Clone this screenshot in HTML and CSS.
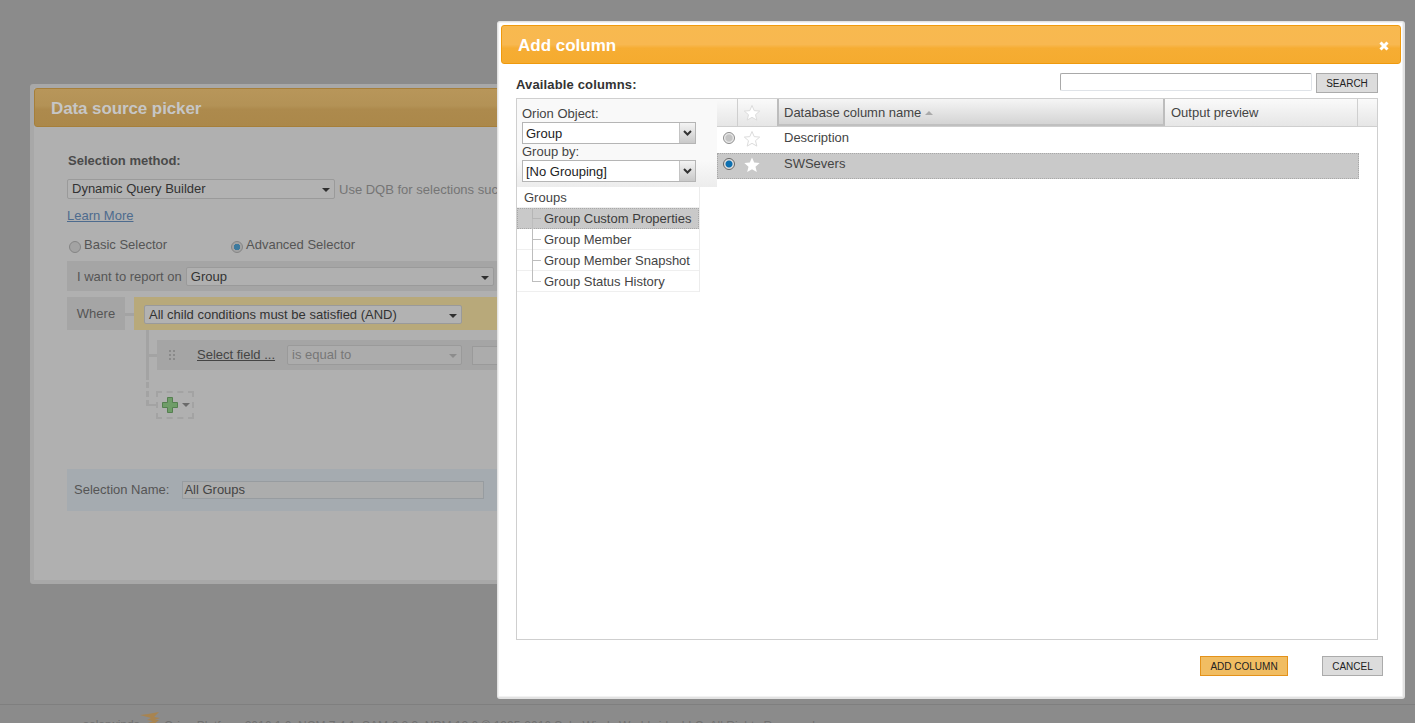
FILE: index.html
```html
<!DOCTYPE html>
<html lang="en">
<head>
<meta charset="utf-8">
<title>Add column</title>
<link rel="stylesheet" href="styles.css">
</head>
<body>
<div class="page-footer">
  <span class="footer-brand">solarwinds</span>
  <svg class="footer-logo" viewBox="0 0 20 12" width="20" height="12"><path d="M0 3 8 2 19 0 14 5 20 6 15 8 19 8 14 12 8 11 13 9 7 8 11 6Z" fill="#a88450"/></svg>
  <span class="footer-text">Orion Platform 2016.1.0, NCM 7.4.1, SAM 6.2.3, NPM 12.0 &copy; 1995-2016 SolarWinds Worldwide, LLC. All Rights Reserved.</span>
</div>

<section class="dlg back">
  <header class="back-head">Data source picker</header>
  <div class="back-body">
    <div class="b-title">Selection method:</div>
    <div class="b-method">
      <div class="b-select b-method-select">Dynamic Query Builder<i class="caret"></i></div>
      <span class="b-hint">Use DQB for selections such as dynamic queries</span>
    </div>
    <a class="b-learn">Learn More</a>
    <div class="b-radios">
      <label class="b-radio-a"><span class="radio dim"></span>Basic Selector</label>
      <label class="b-radio-b"><span class="radio dim on"></span>Advanced Selector</label>
    </div>
    <div class="b-report">
      <span>I want to report on</span>
      <div class="b-select b-report-select">Group<i class="caret"></i></div>
    </div>
    <div class="b-where">
      <div class="b-where-tag">Where</div>
      <div class="b-where-link"></div>
      <div class="b-where-bar"><div class="b-select b-and">All child conditions must be satisfied (AND)<i class="caret"></i></div></div>
    </div>
    <div class="b-tree">
      <div class="b-line"></div>
      <div class="b-cond">
        <svg class="b-grip" width="6" height="10" viewBox="0 0 6 10"><g fill="#8a8a8a"><rect width="2" height="2"/><rect x="4" width="2" height="2"/><rect y="4" width="2" height="2"/><rect x="4" y="4" width="2" height="2"/><rect y="8" width="2" height="2"/><rect x="4" y="8" width="2" height="2"/></g></svg>
        <a class="b-field">Select field ...</a>
        <div class="b-select b-equal">is equal to<i class="caret light"></i></div>
        <div class="b-value"></div>
      </div>
      <div class="b-dash"></div>
      <div class="b-add">
        <svg width="16" height="16" viewBox="0 0 16 16"><path d="M5.500.5h5v5h5v5h-5v5h-5v-5h-5v-5h5z" fill="#6f9d68" stroke="#557f50"/></svg>
        <i class="caret add"></i>
      </div>
    </div>
    <div class="b-name">
      <span class="b-name-label">Selection Name:</span>
      <div class="b-input">All Groups</div>
    </div>
  </div>
</section>

<section class="dlg front">
  <header class="f-head">
    <span>Add column</span>
    <svg class="f-close" width="10" height="10" viewBox="0 0 10 10"><path d="M1.500 1.500 8.500 8.500M8.500 1.500 1.500 8.500" stroke="#fff" stroke-width="3"/></svg>
  </header>
  <div class="f-tools">
    <strong>Available columns:</strong>
    <div class="f-search">
      <div class="f-search-input"></div>
      <div class="btn">SEARCH</div>
    </div>
  </div>
  <div class="f-panel">
    <aside class="f-side">
      <div class="f-filters">
        <div class="f-label">Orion Object:</div>
        <div class="f-select">Group<span class="f-arrow"><svg width="9" height="6" viewBox="0 0 9 6"><path d="M1 1 4.500 4.500 8 1" fill="none" stroke="#333" stroke-width="2"/></svg></span></div>
        <div class="f-label">Group by:</div>
        <div class="f-select">[No Grouping]<span class="f-arrow"><svg width="9" height="6" viewBox="0 0 9 6"><path d="M1 1 4.500 4.500 8 1" fill="none" stroke="#333" stroke-width="2"/></svg></span></div>
      </div>
      <ul class="tree">
        <li class="tree-root">Groups</li>
        <li class="sel"><i class="tee"></i>Group Custom Properties</li>
        <li><i class="tee"></i>Group Member</li>
        <li><i class="tee"></i>Group Member Snapshot</li>
        <li><i class="tee last"></i>Group Status History</li>
      </ul>
    </aside>
    <div class="grid">
      <div class="g-head">
        <div class="c-radio"></div>
        <div class="c-star"><svg width="18" height="18" viewBox="0 0 18 18"><path class="star-o" d="M9 1.500 11.200 6.600 16.700 7.100 12.500 10.700 13.800 16.100 9 13.300 4.200 16.100 5.500 10.700 1.300 7.100 6.800 6.600Z"/></svg></div>
        <div class="c-name">Database column name<i class="sort"></i></div>
        <div class="c-out">Output preview</div>
        <div class="c-end"></div>
      </div>
      <div class="g-row">
        <div class="c-radio"><span class="radio"></span></div>
        <div class="c-star"><svg width="18" height="18" viewBox="0 0 18 18"><path class="star-o" d="M9 1.500 11.200 6.600 16.700 7.100 12.500 10.700 13.800 16.100 9 13.300 4.200 16.100 5.500 10.700 1.300 7.100 6.800 6.600Z"/></svg></div>
        <div class="c-name">Description</div>
      </div>
      <div class="g-row sel">
        <div class="c-radio"><span class="radio on"></span></div>
        <div class="c-star"><svg width="18" height="18" viewBox="0 0 18 18"><path fill="#fff" d="M9 1.500 11.200 6.600 16.700 7.100 12.500 10.700 13.800 16.100 9 13.300 4.200 16.100 5.500 10.700 1.300 7.100 6.800 6.600Z"/></svg></div>
        <div class="c-name">SWSevers</div>
      </div>
    </div>
  </div>
  <footer class="f-foot">
    <div class="btn primary">ADD COLUMN</div>
    <div class="btn cancel">CANCEL</div>
  </footer>
</section>
</body>
</html>
```

FILE: styles.css
```css
* { box-sizing: border-box; }
html, body { margin: 0; height: 723px; overflow: hidden; }
body {
  position: relative;
  background: #8b8b8b;
  font: 13px "Liberation Sans", Arial, sans-serif;
  color: #333;
}
ul { list-style: none; margin: 0; padding: 0; }
i { display: block; }

.page-footer {
  position: absolute;
  left: 0; right: 0; top: 704px; height: 19px;
  border-top: 1px solid #7f7f7f;
  overflow: hidden;
  font-size: 12px;
  color: #707070;
  white-space: nowrap;
}
.footer-brand { position: absolute; left: 83px; top: 13px; }
.footer-logo { position: absolute; left: 140px; top: 7px; }
.footer-text { position: absolute; left: 164px; top: 14px; }

.dlg { position: absolute; }

/* dimmed dialog */
.back {
  left: 30px; top: 84px; width: 500px; height: 500px;
  background: #b0b0b0;
  border: 4px solid #a8a8a8;
  border-radius: 3px;
  overflow: hidden;
  color: #4a4a4a;
}
.back-head {
  height: 39px;
  margin: 0 -4px 0 0;
  padding: 10px 16px 0;
  background: linear-gradient(#b8965a 0, #b39256 45%, #ad8a4d 55%, #ab884a 100%);
  border: 1px solid #a67f3a;
  border-radius: 3px;
  font-size: 17px;
  font-weight: 700;
  letter-spacing: -.1px;
  color: #c6c6c6;
  line-height: 20px;
}
.back-body { padding: 26px 0 0 33px; width: 500px; }
.b-title { font-weight: 700; height: 15px; line-height: 15px; margin-left: 1px; }
.b-select {
  position: relative;
  background: #b2b2b2;
  border: 1px solid #9a9a9a;
  border-radius: 2px;
  color: #333;
  padding-left: 4px;
  white-space: nowrap;
}
.caret {
  position: absolute;
  right: 4px; top: 8px;
  width: 0; height: 0;
  border: 4px solid transparent;
  border-top: 4px solid #2f2f2f;
  border-bottom: 0;
}
.caret.light { border-top-color: #8c8c8c; }
.b-method { display: flex; align-items: center; gap: 4px; margin-top: 4px; white-space: nowrap; padding-top: 7px; }
.b-method-select { width: 268px; height: 20px; line-height: 18px; flex: none; }
.b-hint { color: #757575; }
.b-learn { display: block; margin-top: 10px; height: 14px; line-height: 14px; color: #4d6b8e; text-decoration: underline; }
.b-radios { display: flex; margin-top: 15px; height: 16px; line-height: 14px; color: #555; }
.b-radios label { display: flex; align-items: flex-start; }
.b-radios .radio { margin-top: 3px; }
.b-radio-a { width: 164px; padding-left: 2px; }
.b-report {
  display: flex; align-items: center;
  margin-top: 7px;
  width: 470px; height: 30px;
  padding-left: 10px;
  background: #a5a5a5;
  color: #555;
}
.b-report-select { margin-left: 4px; width: 308px; height: 19px; line-height: 17px; flex: none; background: #b0b0b0; }
.b-where { display: flex; margin-top: 6px; height: 33px; }
.b-where-tag { width: 58px; background: #a5a5a5; text-align: center; line-height: 33px; color: #555; }
.b-where-link { width: 9px; height: 3px; margin-top: 16px; background: #a3a3a3; }
.b-where-bar { width: 400px; background: #b8a97a; padding: 8px 0 0 10px; }
.b-and { width: 318px; height: 19px; line-height: 17px; background: #b2b2b2; }
.b-tree { position: relative; height: 139px; }
.b-line { position: absolute; left: 79px; top: 0; width: 3px; height: 50px; background: #a3a3a3; }
.b-line::after { content: ""; position: absolute; left: 3px; top: 24px; width: 8px; height: 3px; background: #a3a3a3; }
.b-cond {
  position: absolute; left: 90px; top: 10px;
  width: 380px; height: 30px;
  background: #a5a5a5;
  display: flex; align-items: center;
}
.b-grip { margin-left: 12px; flex: none; }
.b-field { margin-left: 22px; margin-bottom: 2px; width: 90px; flex: none; color: #444; text-decoration: underline; white-space: nowrap; }
.b-equal { width: 175px; height: 20px; line-height: 18px; flex: none; color: #777; background: #acacac; }
.b-value { margin-left: 10px; width: 60px; height: 19px; flex: none; border: 1px solid #9a9a9a; background: #acacac; }
.b-dash { position: absolute; left: 79px; top: 52px; width: 10px; height: 24px; border-left: 3px dashed #a3a3a3; border-bottom: 2px dashed #a3a3a3; }
.b-add {
  position: absolute; left: 89px; top: 61px;
  width: 38px; height: 28px;
  border: 2px dashed #a3a3a3;
  padding: 4px 0 0 4px;
  display: flex;
}
.b-add svg { flex: none; }
.caret.add { right: 2px; top: 10px; border-top-color: #6a6a6a; }
.b-name {
  display: flex; align-items: center;
  width: 470px; height: 42px;
  padding-left: 7px;
  background: #a5abb0;
  color: #555;
}
.b-name-label { padding-bottom: 2px; }
.b-input {
  margin-left: 13px;
  width: 302px; height: 18px;
  line-height: 16px;
  padding-left: 1px;
  border: 1px solid #979ca0;
  background: #acadad;
  color: #444;
}

/* front dialog */
.front {
  left: 497px; top: 21px; width: 908px; height: 678px;
  background: #fff;
  border: 1px solid #e2e2e2;
  border-width: 1px 2px 2px 1px;
  border-radius: 3px;
  padding: 3px 2px 0 3px;
  box-shadow: 0 0 0 1px #f2f2f2 inset;
}
.f-head {
  position: relative;
  height: 39px;
  background: linear-gradient(#f8b94f 0, #f8b850 50%, #f6ad33 60%, #f5ab2f 100%);
  border: 1px solid #ef9a0d;
  border-radius: 3px;
  padding: 10px 16px 0;
  font-size: 17px;
  font-weight: 700;
  line-height: 20px;
  color: #fff;
}
.f-close { position: absolute; right: 11px; top: 15px; }
.f-tools {
  display: flex; justify-content: space-between;
  height: 34px;
  margin-left: 15px;
  padding: 9px 23px 0 0;
}
.f-tools strong { padding-top: 4px; line-height: 15px; letter-spacing: .15px; }
.f-search { display: flex; gap: 4px; }
.f-search-input { width: 252px; height: 18px; border: 1px solid #a9a9a9; border-right-color: #dfe3e8; border-bottom-color: #dfe3e8; border-radius: 2px; background: #fff; }
.btn {
  height: 20px;
  line-height: 20px;
  background: #dcdcdc;
  border: 1px solid #ababab;
  font-size: 10px;
  color: #222;
  text-align: center;
}
.f-search .btn { width: 62px; }
.f-panel {
  display: flex;
  margin-left: 15px;
  width: 862px; height: 542px;
  border: 1px solid #cfcfcf;
}
.f-side { width: 200px; flex: none; }
.f-filters {
  height: 88px;
  padding: 7px 21px 0 5px;
  background: linear-gradient(#f9f9f9 0, #f9f9f9 70%, #ececec 100%);
  color: #444;
}
.f-label { height: 16px; line-height: 16px; }
.f-select {
  position: relative;
  height: 22px;
  line-height: 22px;
  padding-left: 3px;
  background: #fff;
  border: 1px solid #b5b5b5;
  color: #222;
}
.f-arrow {
  position: absolute; right: 0; top: 0; bottom: 0;
  width: 16px;
  display: flex; align-items: center; justify-content: center;
  background: linear-gradient(#f4f4f4, #c9c9c9);
  border-left: 1px solid #c4c4c4;
}
.tree { width: 183px; border-right: 1px solid #ececec; }
.tree li {
  position: relative;
  height: 21px;
  line-height: 22px;
  padding-left: 27px;
  border-bottom: 1px solid #efefef;
  color: #444;
  white-space: nowrap;
}
.tree li.tree-root { padding-left: 7px; }
.tree li.sel { background: #c9c9c9; outline: 1px dotted #a8a8a8; outline-offset: -1px; color: #3c3c3c; border-bottom: 0; }
.tee { position: absolute; left: 15px; top: 0; width: 9px; height: 11px; border-left: 1px solid #bdbdbd; border-bottom: 1px solid #bdbdbd; }
.tee:not(.last)::after { content: ""; position: absolute; left: -1px; top: 11px; width: 1px; height: 10px; background: #bdbdbd; }
.sel .tee { border-color: #b5b5b5; }

.grid { flex: 1; min-width: 0; }
.g-head { display: flex; height: 28px; background: linear-gradient(#fafafa, #e6e6e6); border-bottom: 1px solid #cfcfcf; }
.g-head > div { display: flex; align-items: center; border-right: 1px solid #cfcfcf; }
.c-radio { width: 21px; display: flex; align-items: center; justify-content: center; flex: none; }
.c-star { width: 40px; flex: none; display: flex; align-items: center; padding-left: 5px; }
.g-head .c-star { width: 41px; border-right: 2px solid #bdbdbd; }
.c-name { width: 387px; flex: none; padding-left: 6px; color: #444; }
.g-head .c-name { width: 386px; padding-left: 5px; padding-top: 2px; background: linear-gradient(#f5f5f5 0, #dedede 70%, #d4d4d4 100%); border-bottom: 2px solid #c0c0c0; border-right: 2px solid #bdbdbd; height: 27px; }
.c-out { width: 193px; flex: none; padding-left: 6px; color: #444; }
.c-end { flex: 1; border-right: 0 !important; }
.sort { margin-left: 4px; width: 0; height: 0; border: 4px solid transparent; border-bottom: 4px solid #aaa; border-top: 0; }
.g-row { display: flex; align-items: center; width: 642px; height: 26px; padding-bottom: 5px; }
.g-row .c-radio { padding-left: 2px; }
.g-row .c-star { padding-top: 2px; }
.g-row.sel { background: #c9c9c9; outline: 1px dotted #a8a8a8; outline-offset: -1px; }
.star-o { fill: #fff; stroke: #dcdcdc; }
.radio {
  display: block; flex: none;
  width: 12px; height: 12px;
  border-radius: 50%;
  border: 1px solid #8c8c8c;
  background: radial-gradient(circle, #c4c4c4 0 3px, #ececec 4.500px);
}
.radio.on { border-color: #666; background: radial-gradient(circle, #0c6fb0 0 3px, #dedede 4px); }
.radio.dim { border-color: #858585; background: #a3a3a3; margin-right: 3px; }
.radio.dim.on { background: radial-gradient(circle, #3d7a9e 0 3px, #a3a3a3 3.500px); }
.f-foot { display: flex; justify-content: flex-end; gap: 34px; padding: 16px 18px 0 0; }
.btn.primary { width: 88px; background: #f1bd62; border-color: #e4921a; }
.btn.cancel { width: 61px; }
```
